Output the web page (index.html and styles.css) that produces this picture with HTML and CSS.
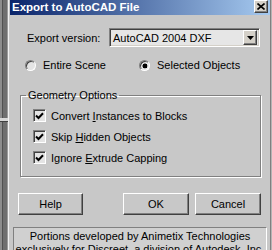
FILE: index.html
```html
<!DOCTYPE html>
<html lang="en">
<head>
  <meta charset="UTF-8">
  <title>Export to AutoCAD File</title>
  <link rel="stylesheet" href="styles.css">
</head>
<body>
  <div class="desk">
    <div class="backdrop-left"></div>
    <div class="dialog">
      <div class="titlebar">
        <span class="title">Export to AutoCAD File</span>
        <span class="close">
          <svg width="8" height="7" viewBox="0 0 8 7"><path d="M0.5 0.5 L7.5 6.5 M7.5 0.5 L0.5 6.5" stroke="#000" stroke-width="1.6" fill="none"/></svg>
        </span>
      </div>

      <div class="version">
        <span class="label">Export version:</span>
        <div class="select">
          <span class="select-text">AutoCAD 2004 DXF</span>
          <span class="arrow-btn">
            <svg width="7" height="4" viewBox="0 0 7 4"><path d="M0 0 H7 L3.5 4 Z" fill="#000"/></svg>
          </span>
        </div>
      </div>

      <div class="radios">
        <span class="radio-item first"><i class="radio"></i>Entire Scene</span>
        <span class="radio-item"><i class="radio checked"></i>Selected Objects</span>
      </div>

      <fieldset class="group">
        <legend>Geometry Options</legend>
        <div class="check-row"><i class="checkbox"><svg width="9" height="8" viewBox="0 0 9 8"><path d="M1 3.5 L3.5 6 L8 1.2" stroke="#000" stroke-width="2" fill="none"/></svg></i><span>Convert <u>I</u>nstances to Blocks</span></div>
        <div class="check-row"><i class="checkbox"><svg width="9" height="8" viewBox="0 0 9 8"><path d="M1 3.5 L3.5 6 L8 1.2" stroke="#000" stroke-width="2" fill="none"/></svg></i><span>Skip <u>H</u>idden Objects</span></div>
        <div class="check-row"><i class="checkbox"><svg width="9" height="8" viewBox="0 0 9 8"><path d="M1 3.5 L3.5 6 L8 1.2" stroke="#000" stroke-width="2" fill="none"/></svg></i><span>Ignore <u>E</u>xtrude Capping</span></div>
      </fieldset>

      <div class="buttons">
        <button class="btn help">Help</button>
        <button class="btn">OK</button>
        <button class="btn">Cancel</button>
      </div>

      <div class="credits">
        Portions developed by Animetix Technologies<br>
        exclusively for Discreet, a division of Autodesk, Inc.
      </div>
    </div>
  </div>
</body>
</html>
```

FILE: styles.css
```css
body {
  margin: 0;
  background: #b4b4b4;
  font-family: "Liberation Sans", Arial, sans-serif;
  font-size: 11px;
  color: #000;
}
.desk {
  display: flex;
  width: 272px;
  height: 250px;
  overflow: hidden;
}
.backdrop-left {
  width: 8px;
  flex: none;
  background:
    linear-gradient(to bottom, transparent 118px, #d8d8d8 118px, #d8d8d8 121px, #404040 121px, #404040 122px, transparent 122px),
    linear-gradient(to right, #8c8c8c 0, #8c8c8c 2px, #505050 2px, #505050 3px, #6e6e6e 3px, #6e6e6e 7px, #9a9a9a 7px);
}
.dialog {
  width: 261px;
  flex: none;
  border-left: 1px solid #f0f0f0;
  border-right: 1px solid #808080;
  background: #c8c8c8;
}
.titlebar {
  height: 15px;
  margin-left: 1px;
  display: flex;
  align-items: flex-start;
  justify-content: space-between;
  background: linear-gradient(to right, #0a246a, #a6caf0);
}
.title {
  padding-left: 2px;
  line-height: 14px;
  font-weight: bold;
  font-size: 11.5px;
  color: #fff;
}
.close {
  width: 14px;
  height: 13px;
  box-sizing: border-box;
  margin-right: 2px;
  display: flex;
  align-items: center;
  justify-content: center;
  background: #d4d0c8;
  border: 1px solid;
  border-color: #fff #404040 #404040 #fff;
  box-shadow: inset -1px -1px #808080;
}
.version {
  display: flex;
  align-items: center;
  margin-top: 13px;
  padding-left: 18px;
}
.label {
  width: 82px;
}
.select {
  width: 151px;
  height: 19px;
  box-sizing: border-box;
  display: flex;
  align-items: center;
  justify-content: space-between;
  background: #e6e6e6;
  border: 1px solid;
  border-color: #808080 #fff #fff #808080;
  box-shadow: inset 1px 1px #404040, inset -1px -1px #d4d0c8;
}
.select-text {
  padding-left: 3px;
}
.arrow-btn {
  width: 14px;
  height: 15px;
  box-sizing: border-box;
  margin-right: 2px;
  display: flex;
  align-items: center;
  justify-content: center;
  background: #d4d0c8;
  border: 1px solid;
  border-color: #fff #404040 #404040 #fff;
  box-shadow: inset -1px -1px #808080;
}
.radios {
  display: flex;
  margin-top: 12px;
  padding-left: 16px;
  line-height: 13px;
}
.radio-item {
  display: flex;
  align-items: center;
}
.radio-item.first {
  width: 114px;
}
.radio {
  width: 11px;
  height: 11px;
  box-sizing: border-box;
  margin-right: 7px;
  border-radius: 50%;
  background: #e4e4e4;
  border: 1px solid;
  border-color: #808080 #fff #fff #808080;
  box-shadow: inset 1px 1px #404040;
}
.radio.checked {
  background: radial-gradient(circle at 55% 55%, #000 0, #000 2.2px, #e4e4e4 2.7px);
}
.group {
  margin: 16px 9px 0 11px;
  padding: 7px 0 12px 12px;
  border: 1px solid #808080;
  box-shadow: inset 1px 1px #fff, 1px 1px #fff;
}
.group legend {
  margin-left: -7px;
  padding: 0 2px;
  line-height: 14px;
}
.check-row {
  display: flex;
  align-items: center;
  height: 13px;
  margin-bottom: 8px;
}
.check-row:last-child {
  margin-bottom: 0;
}
.checkbox {
  width: 13px;
  height: 13px;
  box-sizing: border-box;
  margin-right: 5px;
  display: flex;
  align-items: center;
  justify-content: center;
  background: #e4e4e4;
  border: 1px solid;
  border-color: #808080 #fff #fff #808080;
  box-shadow: inset 1px 1px #404040;
}
.buttons {
  display: flex;
  gap: 6px;
  margin-top: 16px;
  padding: 0 9px;
}
.btn {
  width: 66px;
  height: 22px;
  padding: 0;
  font: inherit;
  color: #000;
  background: #c8c8c8;
  border: 1px solid;
  border-color: #fff #404040 #404040 #fff;
  box-shadow: inset -1px -1px #808080;
}
.btn.help {
  width: 65px;
  margin-right: auto;
}
.credits {
  margin: 12px 3px 0 4px;
  padding-top: 2px;
  height: 40px;
  line-height: 13px;
  text-align: center;
  white-space: nowrap;
  background: #d0d0d0;
  border: 1px solid;
  border-color: #808080 #fff #fff #808080;
}
```
